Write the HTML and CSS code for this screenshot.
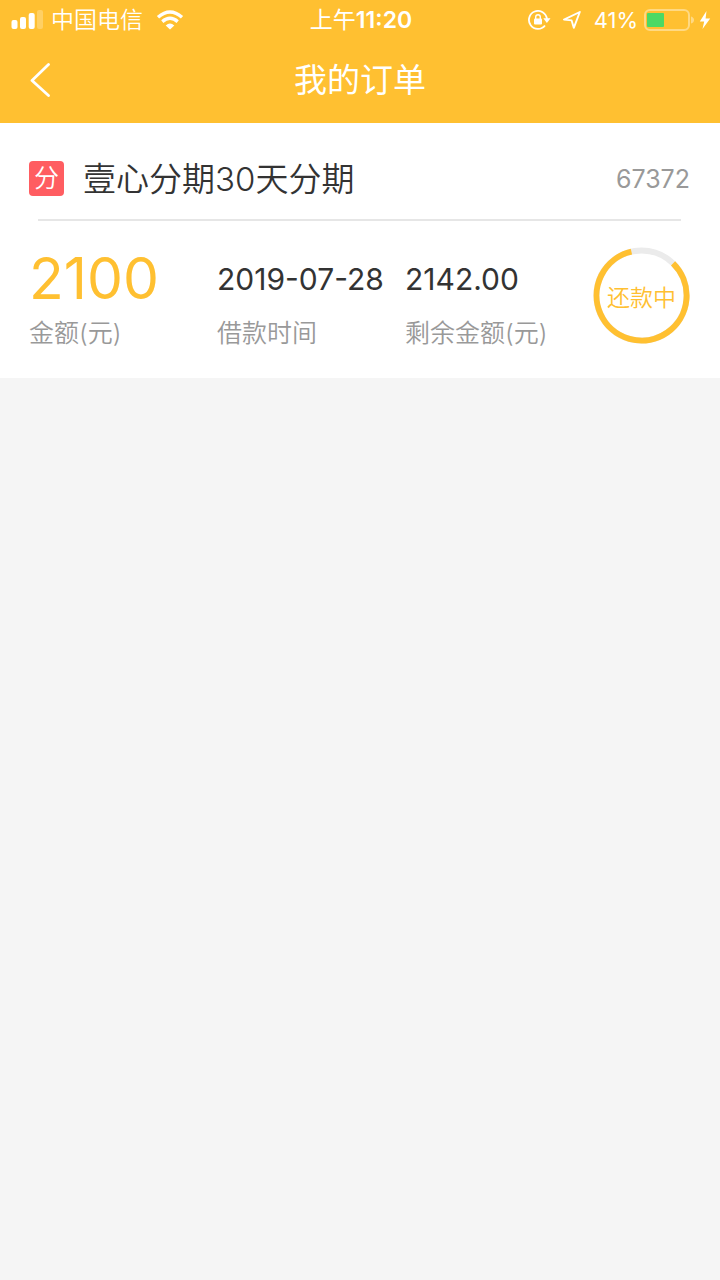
FILE: index.html
```html
<!DOCTYPE html>
<html lang="zh-CN">
<head>
<meta charset="utf-8">
<meta name="viewport" content="width=device-width, initial-scale=1">
<title>我的订单</title>
<link rel="stylesheet" href="styles.css">
</head>
<body>
<header class="top">
  <div class="status">
    <div class="status-left">
      <svg class="signal" width="32" height="20" viewBox="0 0 32 20" fill="#fff" aria-hidden="true">
        <rect x="0.500" y="10" width="6" height="9" rx="2"/>
        <rect x="9" y="7" width="6" height="12" rx="2"/>
        <rect x="17.700" y="3" width="6" height="16" rx="2"/>
        <rect x="26" y="0" width="6" height="19" rx="2" opacity=".25"/>
      </svg>
      <span class="carrier">中国电信</span>
      <svg class="wifi" width="28" height="20" viewBox="0 0 28 20" aria-hidden="true">
        <path d="M2 7.200Q14-3.200 26 7.200M6.300 11.600Q14 5 21.700 11.600" fill="none" stroke="#fff" stroke-width="3.400"/>
        <path d="M9.700 15.500Q14 11.500 18.300 15.500L14 19.500Z" fill="#fff"/>
      </svg>
    </div>
    <time class="clock">上午<b class="clock-digits">11:20</b></time>
    <div class="status-right">
      <svg class="lock" width="23" height="20" viewBox="0 0 23 20" aria-hidden="true">
        <path d="M17 15.500A9 9 0 1 1 18.900 9" fill="none" stroke="#fff" stroke-width="1.800"/>
        <path d="M15.300 8.300H22.500L18.900 13Z" fill="#fff"/>
        <rect x="6" y="8.500" width="8" height="6" rx="1" fill="#fff"/>
        <path d="M7.700 9V7a2.300 2.300 0 0 1 4.600 0v2" fill="none" stroke="#fff" stroke-width="1.400"/>
      </svg>
      <svg class="location" width="18" height="18" viewBox="0 0 18 18" aria-hidden="true">
        <path d="M16.800 1L1 8.600L8.600 9.400L10.800 16.800Z" fill="none" stroke="#fff" stroke-width="1.900" stroke-linejoin="round"/>
      </svg>
      <span class="percent">41%</span>
      <svg class="battery" width="51" height="22" viewBox="0 0 51 22" aria-hidden="true">
        <rect x="1" y="1" width="44" height="20" rx="5" fill="none" stroke="#fff" stroke-width="2" opacity=".4"/>
        <path d="M47 7.500Q50 8.500 50 11T47 14.500Z" fill="#fff" opacity=".4"/>
        <rect x="3" y="4" width="17" height="14" rx="1" fill="#4cd964"/>
      </svg>
      <svg class="bolt" width="12" height="20" viewBox="0 0 12 20" fill="#fff" aria-hidden="true">
        <path d="M7.500 1L.8 11.500H5.200L3.500 19L11.200 8.500H6.600Z"/>
      </svg>
    </div>
  </div>
  <nav class="nav">
    <button class="back" type="button" aria-label="返回">
      <svg width="20" height="34" viewBox="0 0 20 34" fill="none" stroke="#fff" stroke-width="2.800" stroke-linecap="round" stroke-linejoin="round" aria-hidden="true"><path d="M18.500 1.500L2 17.500L18.500 32.500"/></svg>
    </button>
    <h1 class="title">我的订单</h1>
  </nav>
</header>
<main>
  <article class="order">
    <div class="order-head">
      <span class="tag">分</span>
      <h2 class="name">壹心分期30天分期</h2>
      <span class="number">67372</span>
    </div>
    <div class="order-body">
      <dl class="stat">
        <dt class="label">金额(元)</dt>
        <dd class="value value-main">2100</dd>
      </dl>
      <dl class="stat">
        <dt class="label">借款时间</dt>
        <dd class="value">2019-07-28</dd>
      </dl>
      <dl class="stat">
        <dt class="label">剩余金额(元)</dt>
        <dd class="value">2142.00</dd>
      </dl>
      <div class="ring">
        <svg class="ring-track" width="97" height="97" viewBox="0 0 98 98" fill="none" stroke-width="6" aria-hidden="true">
          <circle cx="49" cy="49" r="45.500" stroke="#ebebeb"/>
          <path d="M80.900 16.500A45.500 45.500 0 1 1 38.800 4.700" stroke="#ffc031"/>
        </svg>
        <span class="ring-text">还款中</span>
      </div>
    </div>
  </article>
</main>
</body>
</html>
```
FILE: styles.css
```css
* {
  box-sizing: border-box;
}

body {
  margin: 0;
  background: #f5f5f5;
  color: #333;
  font-family: Inter, "Noto Sans CJK SC", sans-serif;
}

h1, h2, dl, dd {
  margin: 0;
  font-weight: 400;
}

.top {
  background: #ffc031;
  color: #fff;
}

.status {
  display: grid;
  grid-template-columns: 1fr auto 1fr;
  align-items: center;
  height: 40px;
  padding: 0 9px 0 11px;
  font-size: 23px;
  line-height: 32px;
}

.status-left,
.status-right {
  display: flex;
  align-items: center;
}

.status-right {
  justify-content: flex-end;
}

.carrier {
  margin: 0 13px 0 8px;
  font-weight: 350;
}

.clock {
  font-size: 23px;
}

.clock-digits {
  font-weight: 600;
}

.location {
  margin: 0 13px 0 12px;
}

.percent {
  margin-right: 6px;
  font-size: 22px;
}

.bolt {
  margin-left: 4px;
}

.nav {
  display: grid;
  grid-template-columns: 60px 1fr 60px;
  align-items: center;
  height: 83px;
  padding-bottom: 3px;
}

.back {
  display: flex;
  padding: 0 0 0 30px;
  border: 0;
  background: none;
}

.title {
  font-size: 33px;
  font-weight: 400;
  line-height: 48px;
  text-align: center;
}

.order {
  padding: 0 30px 23px 29px;
  background: #fff;
}

.order-head {
  display: flex;
  align-items: center;
  height: 96px;
  padding-top: 15px;
}

.tag {
  width: 35px;
  margin-right: 19px;
  border-radius: 4px;
  background: #ff5d61;
  color: #fff;
  font-size: 25px;
  font-weight: 350;
  line-height: 35px;
  text-align: center;
}

.name {
  flex: 1;
  font-size: 33px;
  font-weight: 350;
  line-height: 48px;
}

.number {
  color: #999;
  font-size: 25px;
}

.order-body {
  position: relative;
  display: grid;
  grid-template-columns: repeat(3, minmax(0, 1fr)) 97px;
  padding-top: 28px;
}

.order-body::before {
  content: "";
  position: absolute;
  top: 0;
  left: 9px;
  right: 9px;
  height: 2px;
  background: #e6e6e6;
}

.stat {
  display: flex;
  flex-direction: column-reverse;
  white-space: nowrap;
}

.label {
  color: #999;
  font-size: 25px;
  font-weight: 350;
  line-height: 44px;
}

.value {
  font-size: 30px;
  line-height: 64px;
}

.value-main {
  color: #ffc031;
  font-size: 57px;
}

.ring {
  display: grid;
  place-items: center;
  height: 97px;
}

.ring-track,
.ring-text {
  grid-area: 1 / 1;
}

.ring-text {
  color: #ffc031;
  font-size: 23px;
  font-weight: 350;
}
```
